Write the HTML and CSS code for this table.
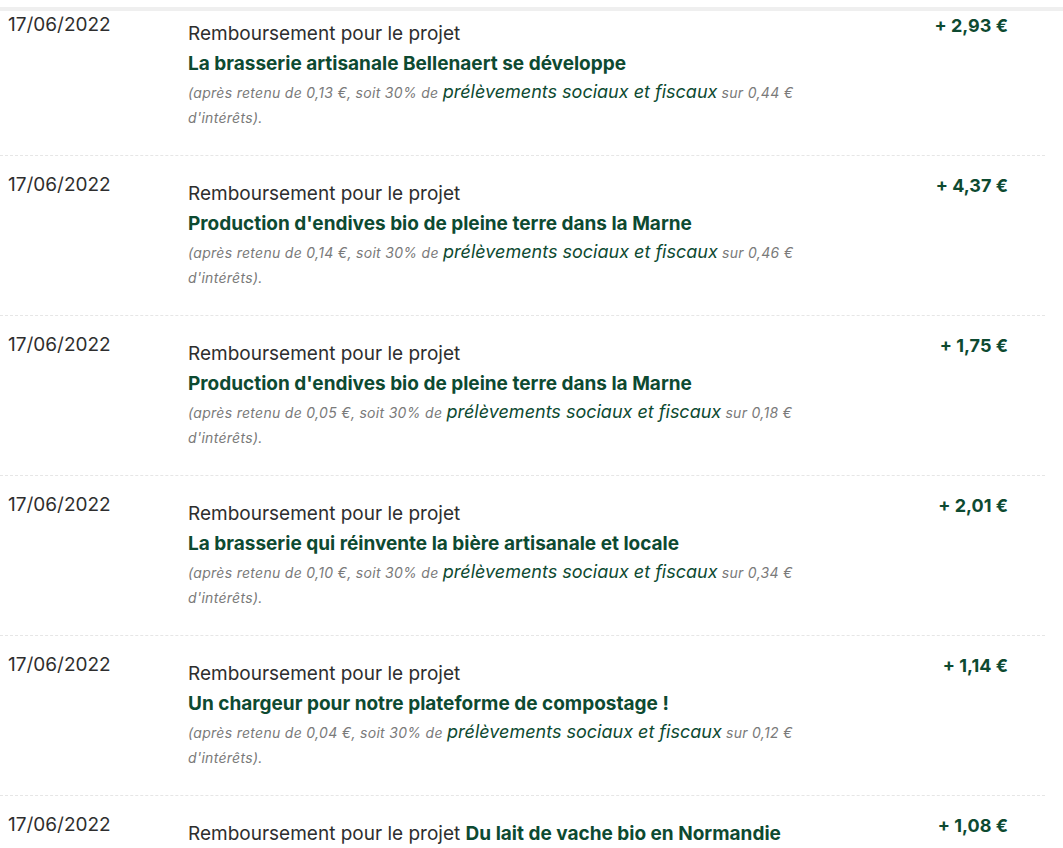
FILE: index.html
```html
<!DOCTYPE html>
<html lang="fr">
<head>
<meta charset="utf-8">
<link rel="stylesheet" href="styles.css">
</head>
<body>
<div class="topbar"></div>
<ul class="ops">
  <li class="op first">
    <div class="date">17/06/2022</div>
    <div class="desc">
      <div class="label">Remboursement pour le projet</div>
      <div class="project">La brasserie artisanale Bellenaert se développe</div>
      <p class="note">(après retenu de 0,13 €, soit 30% de <span class="tax">prélèvements sociaux et fiscaux</span> sur 0,44 € d'intérêts).</p>
    </div>
    <div class="amount">+ 2,93 €</div>
  </li>
  <li class="op">
    <div class="date">17/06/2022</div>
    <div class="desc">
      <div class="label">Remboursement pour le projet</div>
      <div class="project">Production d'endives bio de pleine terre dans la Marne</div>
      <p class="note">(après retenu de 0,14 €, soit 30% de <span class="tax">prélèvements sociaux et fiscaux</span> sur 0,46 € d'intérêts).</p>
    </div>
    <div class="amount">+ 4,37 €</div>
  </li>
  <li class="op">
    <div class="date">17/06/2022</div>
    <div class="desc">
      <div class="label">Remboursement pour le projet</div>
      <div class="project">Production d'endives bio de pleine terre dans la Marne</div>
      <p class="note">(après retenu de 0,05 €, soit 30% de <span class="tax">prélèvements sociaux et fiscaux</span> sur 0,18 € d'intérêts).</p>
    </div>
    <div class="amount">+ 1,75 €</div>
  </li>
  <li class="op">
    <div class="date">17/06/2022</div>
    <div class="desc">
      <div class="label">Remboursement pour le projet</div>
      <div class="project">La brasserie qui réinvente la bière artisanale et locale</div>
      <p class="note">(après retenu de 0,10 €, soit 30% de <span class="tax">prélèvements sociaux et fiscaux</span> sur 0,34 € d'intérêts).</p>
    </div>
    <div class="amount">+ 2,01 €</div>
  </li>
  <li class="op">
    <div class="date">17/06/2022</div>
    <div class="desc">
      <div class="label">Remboursement pour le projet</div>
      <div class="project">Un chargeur pour notre plateforme de compostage !</div>
      <p class="note">(après retenu de 0,04 €, soit 30% de <span class="tax">prélèvements sociaux et fiscaux</span> sur 0,12 € d'intérêts).</p>
    </div>
    <div class="amount">+ 1,14 €</div>
  </li>
  <li class="op last">
    <div class="date">17/06/2022</div>
    <div class="desc">
      <div class="label">Remboursement pour le projet <span class="project inline">Du lait de vache bio en Normandie</span></div>
    </div>
    <div class="amount">+ 1,08 €</div>
  </li>
</ul>
</body>
</html>
```
FILE: styles.css
```css
html, body {
  margin: 0;
  padding: 0;
  background: #fff;
  overflow: hidden;
}
body {
  font-family: Inter, "Noto Sans", sans-serif;
  color: #2b2b2b;
  height: 848px;
}
.topbar {
  height: 4px;
  margin-top: 7px;
  background: #efefef;
}
.ops {
  list-style: none;
  margin: 0;
  padding: 0;
  width: 1045px;
}
.op {
  display: flex;
  align-items: flex-start;
  height: 160px;
  box-sizing: border-box;
  padding: 17px 37px 0 8px;
  border-bottom: 1px dashed #e6e6e6;
}
.op.first {
  height: 145px;
  padding-top: 2px;
}
.date {
  width: 180px;
  flex: none;
  font-size: 19px;
  line-height: 24px;
  color: #2e2e2e;
}
.desc {
  flex: none;
  width: 612px;
  padding-top: 6px;
}
.label {
  font-size: 19px;
  line-height: 30px;
  color: #2e2e2e;
}
.project {
  font-size: 19px;
  line-height: 30px;
  font-weight: 700;
  color: #0d4a31;
}
.note {
  margin: 0;
  font-size: 14px;
  line-height: 25px;
  letter-spacing: 0.3px;
  font-style: italic;
  color: #7a7a7a;
}
.tax {
  font-size: 18px;
  letter-spacing: 0;
  color: #0d4a31;
}
.amount {
  margin-left: auto;
  font-size: 18px;
  line-height: 24px;
  font-weight: 700;
  color: #0d4a31;
  padding-top: 1px;
}
```
